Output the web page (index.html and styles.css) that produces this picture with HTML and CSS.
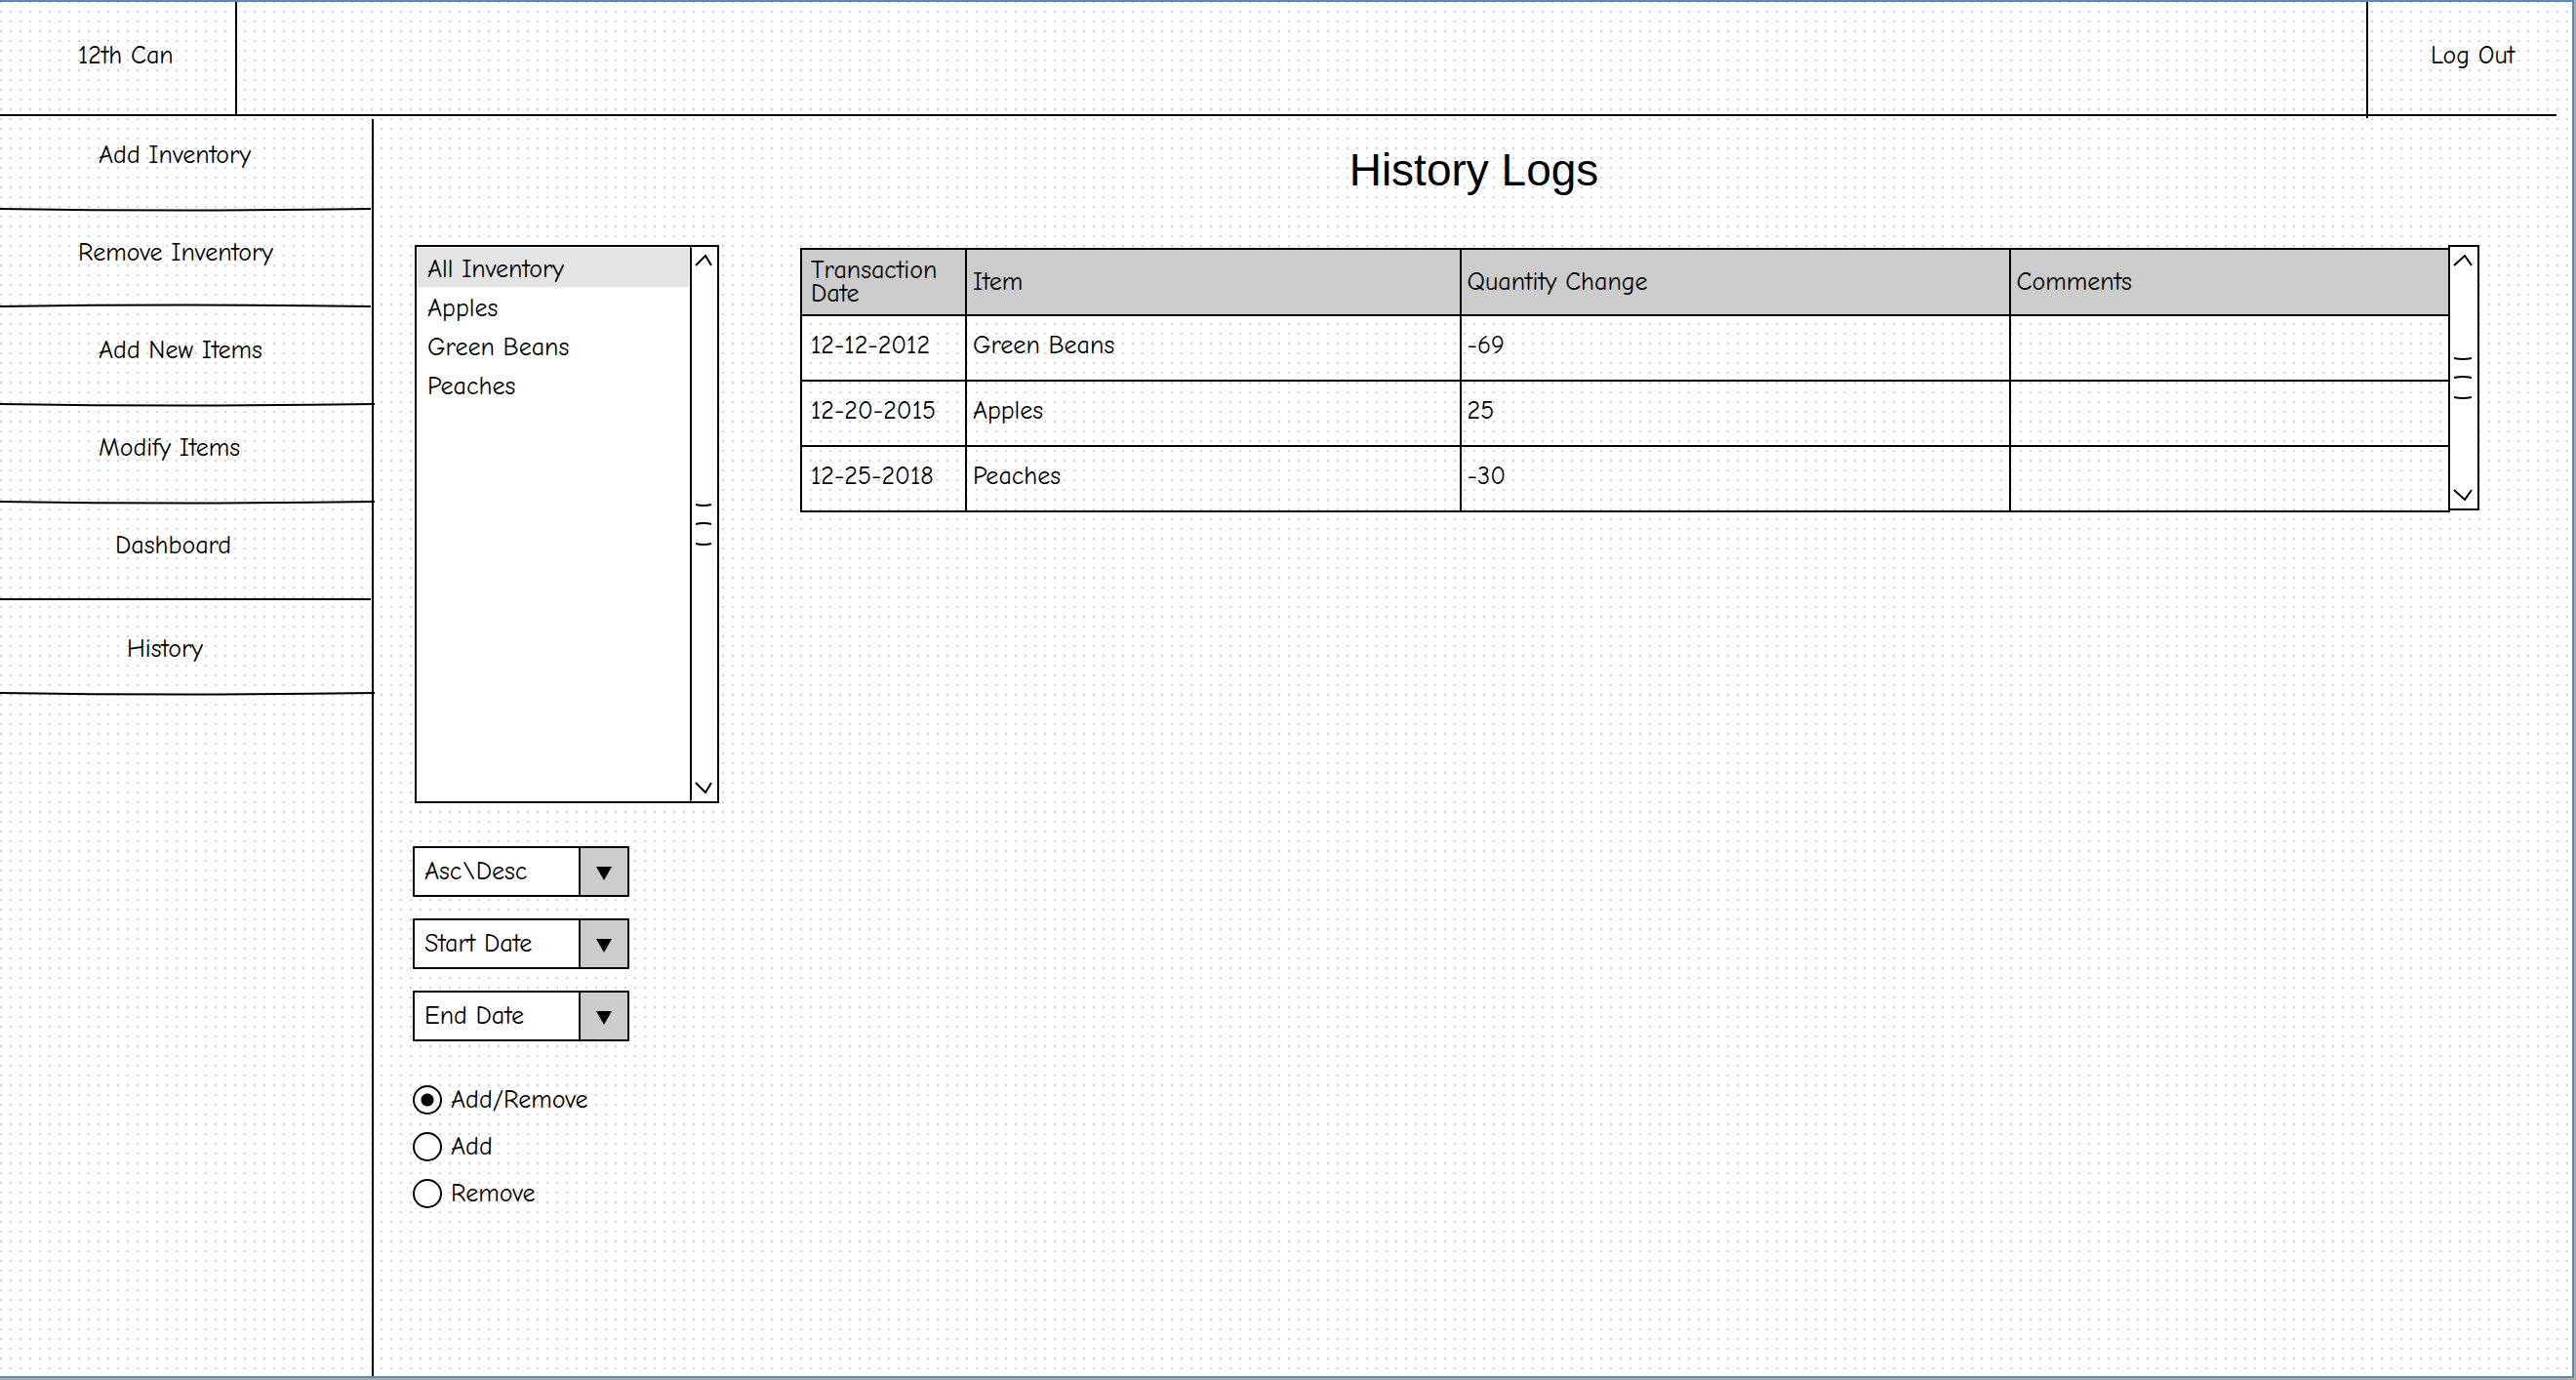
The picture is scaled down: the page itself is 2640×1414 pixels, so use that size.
FILE: index.html
```html
<!DOCTYPE html>
<html lang="en">
<head>
<meta charset="utf-8">
<meta name="viewport" content="width=device-width, initial-scale=1">
<title>History Logs</title>
<link rel="stylesheet" href="styles.css">
</head>
<body>
<div class="canvas">
  <header class="topbar">
    <a class="brand" href="#">12th Can</a>
    <a class="logout" href="#">Log Out</a>
  </header>
  <div class="body">
    <nav class="sidebar" aria-label="Main">
      <a class="nav-item indent-3" href="#">Add Inventory<svg class="rule" viewBox="0 0 100 6" preserveAspectRatio="none" aria-hidden="true"><path d="M0 2Q50 5 100 2"/></svg></a>
      <a class="nav-item indent-1" href="#">Remove Inventory<svg class="rule" viewBox="0 0 100 6" preserveAspectRatio="none" aria-hidden="true"><path d="M0 2Q50 -1 100 2"/></svg></a>
      <a class="nav-item indent-3" href="#">Add New Items<svg class="rule long" viewBox="0 0 100 6" preserveAspectRatio="none" aria-hidden="true"><path d="M0 2Q50 5 100 2"/></svg></a>
      <a class="nav-item indent-3" href="#">Modify Items<svg class="rule long" viewBox="0 0 100 6" preserveAspectRatio="none" aria-hidden="true"><path d="M0 2Q50 5 100 2"/></svg></a>
      <a class="nav-item indent-4" href="#">Dashboard<svg class="rule" viewBox="0 0 100 6" preserveAspectRatio="none" aria-hidden="true"><path d="M0 2H100"/></svg></a>
      <a class="nav-item indent-5 last" href="#" aria-current="page">History<svg class="rule long" viewBox="0 0 100 6" preserveAspectRatio="none" aria-hidden="true"><path d="M0 2Q50 5 100 2"/></svg></a>
    </nav>
    <main class="content">
      <h1>History Logs</h1>
      <div class="panels">
        <form class="filters">
          <div class="listbox">
            <select class="items" size="4" aria-label="Inventory item">
              <option selected>All Inventory</option>
              <option>Apples</option>
              <option>Green Beans</option>
              <option>Peaches</option>
            </select>
            <div class="scroll" aria-hidden="true">
              <svg width="18" height="12" viewBox="0 0 18 12"><path d="M1 11L11 1L17 11"/></svg>
              <svg width="18" height="44" viewBox="0 0 18 44"><path d="M1 2Q9 4 17 2M1 22Q9 20 17 22M1 42Q9 44 17 42"/></svg>
              <svg width="18" height="12" viewBox="0 0 18 12"><path d="M1 1L11 11L17 1"/></svg>
            </div>
          </div>
          <div class="dropdowns">
            <div class="dropdown"><select aria-label="Sort order"><option>Asc\Desc</option></select></div>
            <div class="dropdown"><select aria-label="Start date"><option>Start Date</option></select></div>
            <div class="dropdown"><select aria-label="End date"><option>End Date</option></select></div>
          </div>
          <div class="radios">
            <label><input type="radio" name="kind" checked>Add/Remove</label>
            <label><input type="radio" name="kind">Add</label>
            <label><input type="radio" name="kind">Remove</label>
          </div>
        </form>
        <div class="log">
          <table>
            <colgroup><col class="c-date"><col class="c-item"><col class="c-qty"><col class="c-note"></colgroup>
            <thead>
              <tr><th scope="col">Transaction Date</th><th scope="col">Item</th><th scope="col">Quantity Change</th><th scope="col">Comments</th></tr>
            </thead>
            <tbody>
              <tr><td>12-12-2012</td><td>Green Beans</td><td>-69</td><td></td></tr>
              <tr><td>12-20-2015</td><td>Apples</td><td>25</td><td></td></tr>
              <tr><td>12-25-2018</td><td>Peaches</td><td>-30</td><td></td></tr>
            </tbody>
          </table>
          <div class="scroll framed" aria-hidden="true">
            <svg width="20" height="12" viewBox="0 0 20 12"><path d="M1 11L12 1L19 11"/></svg>
            <svg width="20" height="44" viewBox="0 0 20 44"><path d="M1 2Q10 4 19 2M1 22Q10 20 19 22M1 42Q10 44 19 42"/></svg>
            <svg width="20" height="12" viewBox="0 0 20 12"><path d="M1 1L12 11L19 1"/></svg>
          </div>
        </div>
      </div>
    </main>
  </div>
</div>
</body>
</html>
```
FILE: styles.css
```css
* {
  box-sizing: border-box;
}

body {
  margin: 0;
  min-height: 100vh;
  display: flex;
  border: solid #aaa;
  border-width: 0 2px 2px 0;
  background: #fff;
  color: #000;
  font: 26px/32px "Comic Sans MS", "Comic Neue", "Noto Sans", sans-serif;
}

.canvas {
  flex: 1;
  display: flex;
  flex-direction: column;
  border: solid #5b8bb5;
  border-width: 2px 2px 2px 0;
  background: conic-gradient(from 270deg at 2px 2px, #d3d3d3 90deg, #fff 0) 0 9px / 10px 10px;
}

a {
  color: inherit;
  text-decoration: none;
}

.topbar {
  display: flex;
  justify-content: space-between;
  height: 117px;
  margin-right: 16px;
  border-bottom: 2px solid #000;
}

.brand {
  width: 243px;
  padding: 39px 0 0 80px;
  border-right: 2px solid #000;
}

.logout {
  width: 195px;
  height: 119px;
  padding: 39px 0 0 64px;
  border-left: 2px solid #000;
}

.body {
  flex: 1;
  display: flex;
  padding-top: 3px;
}

.sidebar {
  width: 383px;
  border-right: 2px solid #000;
}

.nav-item {
  position: relative;
  display: block;
  height: 100px;
  padding-top: 28px;
}

.nav-item:first-child {
  height: 93px;
  padding-top: 21px;
}

.nav-item.last {
  height: 96px;
  padding-top: 34px;
}

.indent-1 { padding-left: 80px; }
.indent-3 { padding-left: 101px; }
.indent-4 { padding-left: 118px; }
.indent-5 { padding-left: 130px; }

.rule {
  position: absolute;
  left: 0;
  bottom: -3px;
  width: 380px;
  height: 6px;
  overflow: visible;
}

.rule.long {
  width: 384px;
}

svg path {
  fill: none;
  stroke: #000;
  stroke-width: 2px;
  vector-effect: non-scaling-stroke;
}

.content {
  flex: 1;
  padding: 26px 95px 0 40px;
}

h1 {
  margin: 0;
  padding-left: 57px;
  font: 46px/52px "Liberation Sans", Arial, sans-serif;
  text-align: center;
}

.panels {
  display: flex;
  gap: 83px;
  padding-top: 51px;
}

.filters {
  width: 314px;
}

.listbox {
  display: flex;
  height: 572px;
  margin-left: 2px;
  border: 2px solid #000;
  background: #fff;
}

.items {
  flex: 1;
  padding: 1px;
  border: 0;
  border-right: 2px solid #000;
  outline: 0;
  background: #fff;
  color: #000;
  font: inherit;
  overflow: hidden;
}

.items option {
  height: 40px;
  padding: 7px 10px 0;
  font: inherit;
  color: #000;
}

.items option:checked {
  background: linear-gradient(#e4e4e4, #e4e4e4);
}

.scroll {
  display: flex;
  flex-direction: column;
  align-items: center;
  justify-content: space-between;
  width: 26px;
  padding: 8px 2px 8px 0;
}

.dropdowns {
  display: flex;
  flex-direction: column;
  gap: 22px;
  padding-top: 44px;
}

.dropdown {
  position: relative;
  width: 222px;
}

.dropdown::after {
  content: "";
  position: absolute;
  right: 18px;
  top: 21px;
  border: solid transparent;
  border-width: 14px 8px 0;
  border-top-color: #000;
  pointer-events: none;
}

.dropdown select {
  display: block;
  width: 100%;
  height: 52px;
  padding: 0 52px 0 10px;
  border: 2px solid #000;
  border-radius: 1px;
  appearance: none;
  background: linear-gradient(to left, #ccc 48px, #000 48px 50px, #fff 50px);
  color: #000;
  font: inherit;
}

.radios {
  display: flex;
  flex-direction: column;
  gap: 16px;
  padding-top: 44px;
}

.radios label {
  display: flex;
  align-items: center;
  gap: 9px;
}

.radios input {
  width: 30px;
  height: 30px;
  margin: 0;
  border: 2px solid #000;
  border-radius: 50%;
  appearance: none;
  background: #fff;
}

.radios input:checked {
  background: radial-gradient(circle, #000 6px, #fff 7px);
}

.log {
  flex: 1;
  display: flex;
  align-items: flex-start;
}

table {
  flex: 1;
  width: 100%;
  margin-top: 3px;
  border-collapse: collapse;
  table-layout: fixed;
}

.c-date { width: 10%; }
.c-item { width: 30%; }
.c-qty { width: 33.33%; }

th,
td {
  height: 67px;
  padding: 0 6px 5px;
  border: 2px solid #000;
  font-weight: 400;
  text-align: left;
  vertical-align: middle;
}

th {
  height: 68px;
  padding-bottom: 0;
  background: #ccc;
  line-height: 24px;
}

th:first-child,
td:first-child {
  padding-left: 9px;
}

.scroll.framed {
  width: 32px;
  height: 272px;
  margin-left: -2px;
  border: 2px solid #000;
  background: #fff;
}
```
